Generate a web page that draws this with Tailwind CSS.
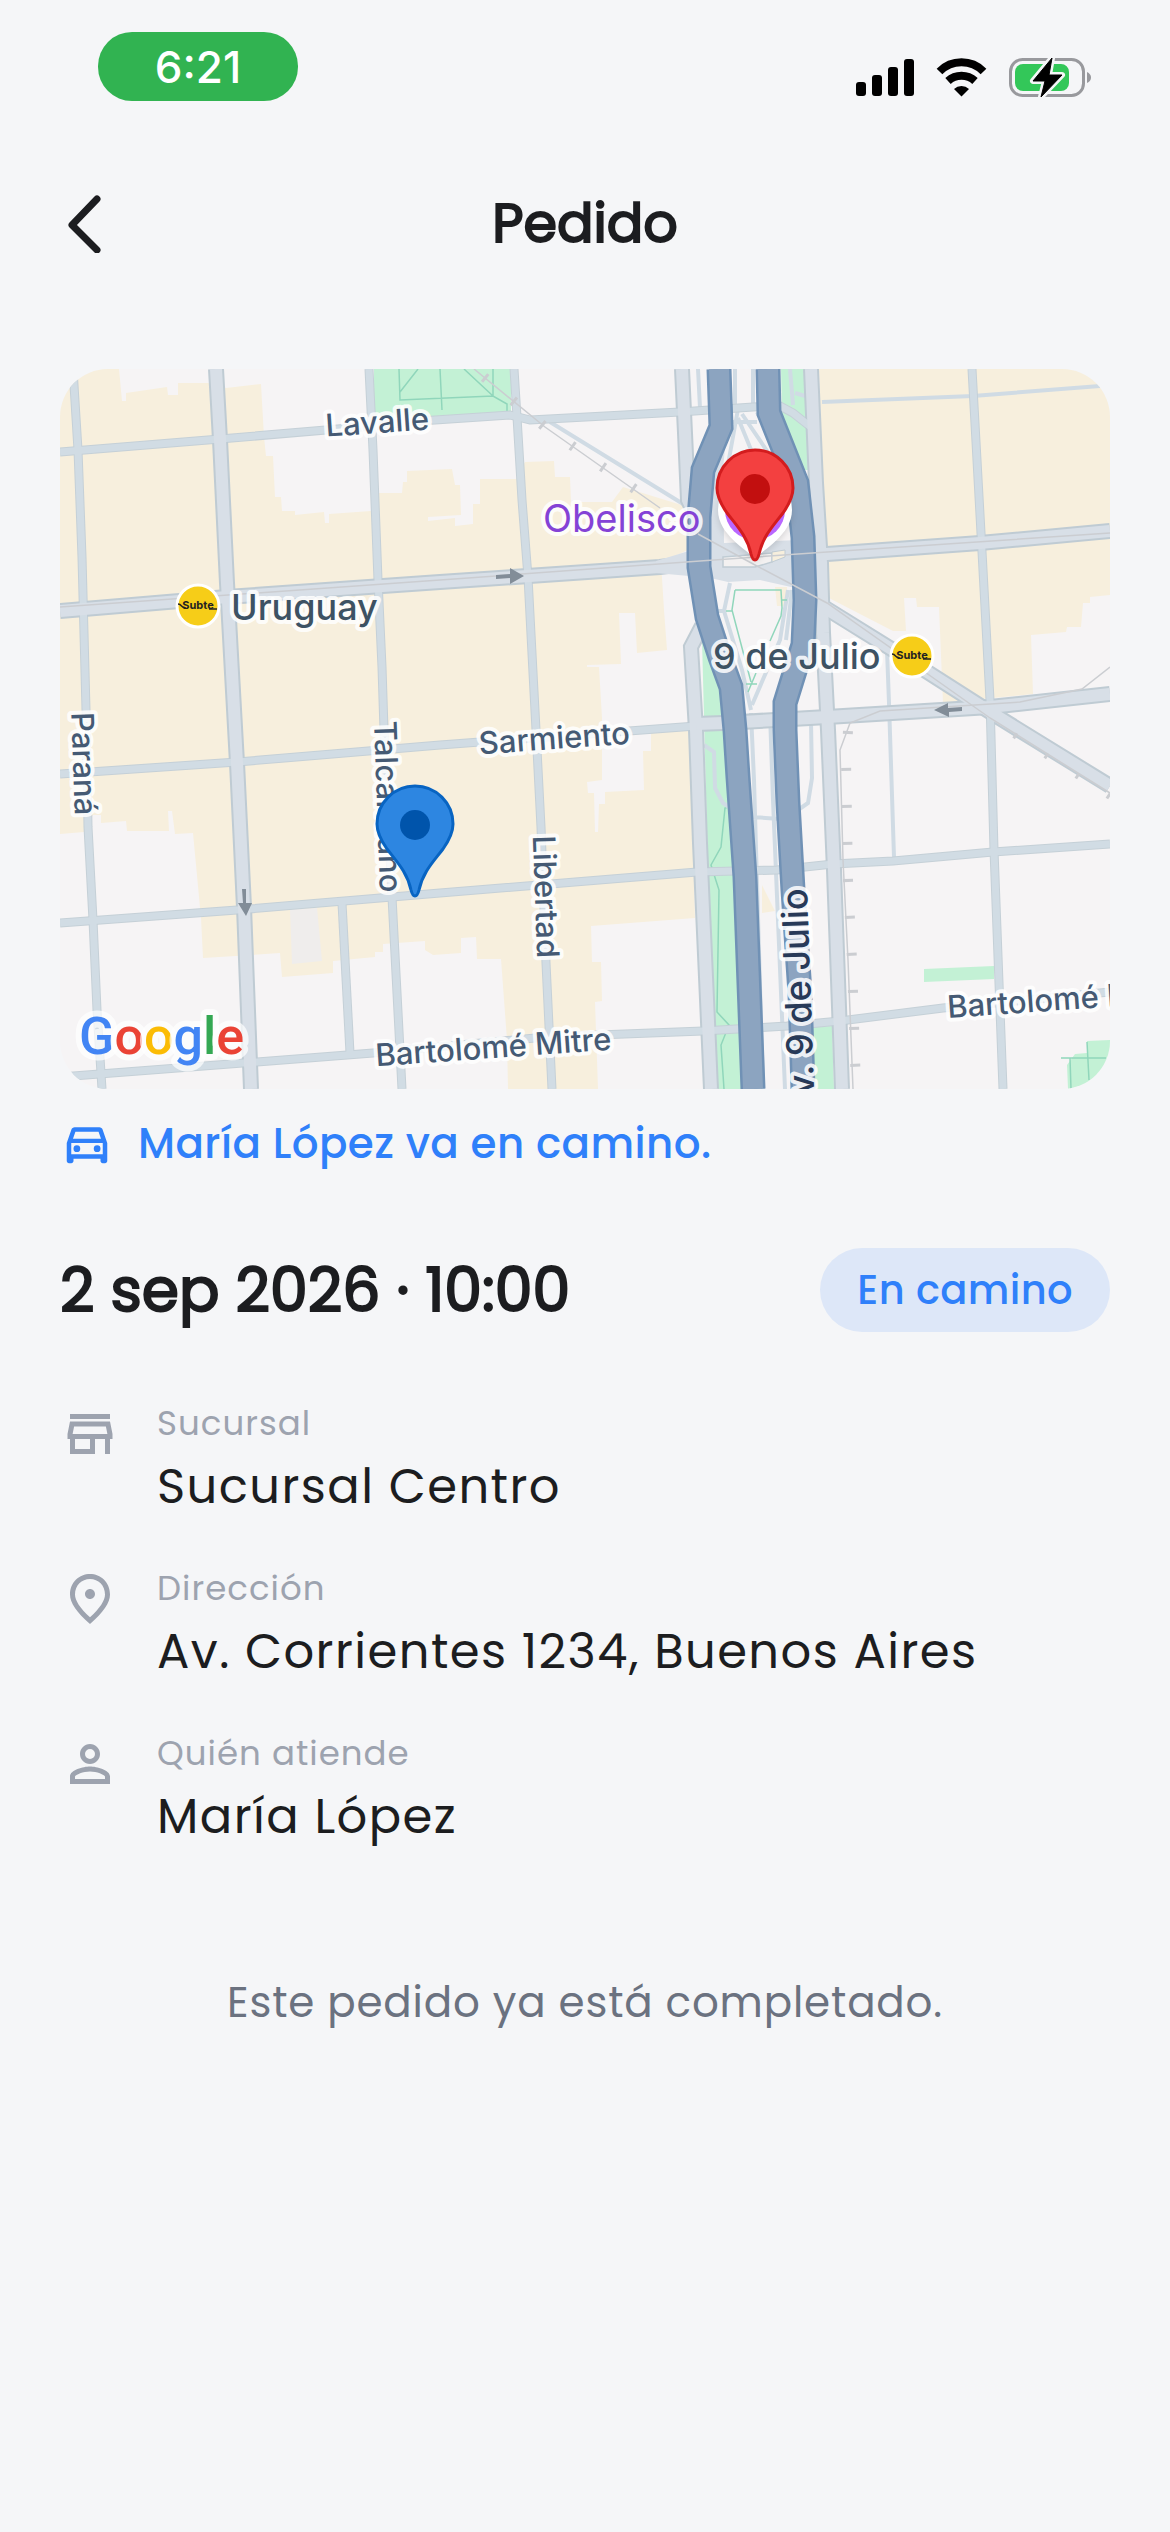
<!DOCTYPE html>
<html lang="es">
<head>
<meta charset="utf-8">
<meta name="viewport" content="width=device-width, initial-scale=1">
<title>Pedido</title>
<script src="https://cdn.jsdelivr.net/npm/@tailwindcss/browser@4"></script>
</head>
<body class="min-h-screen bg-[#f5f6f8] font-['Poppins','Inter',sans-serif] text-[#1c1d20]">

<div class="flex items-start justify-between pt-8 pr-[76px] pl-[98px]">
  <div class="flex h-[69px] w-[200px] items-center justify-center rounded-[34px] bg-[#31b351] font-['Inter',sans-serif] text-[44px] font-medium text-white">6:21</div>
  <svg class="mt-6 h-[44px] w-[240px]" viewBox="854 56 240 44" aria-hidden="true">
    <rect x="856" y="82" width="10" height="14" rx="3"/>
    <rect x="872" y="75" width="10" height="21" rx="3"/>
    <rect x="888" y="67" width="10" height="29" rx="3"/>
    <rect x="904" y="59" width="10" height="37" rx="3"/>
    <g fill="none" stroke="#000" stroke-width="8">
      <path d="M939.500 71.500a31 31 0 0 1 44 0"/>
      <path d="M948 81a20 20 0 0 1 27 0"/>
    </g>
    <path d="M954 89a11 11 0 0 1 15 0l-7.500 7.500z"/>
    <rect x="1010.500" y="59.500" width="73" height="36" rx="12" fill="none" stroke="#98999d" stroke-width="3"/>
    <path d="M1087 72q4 2 4 5.500t-4 5.500z" fill="#98999d"/>
    <rect x="1015" y="64" width="54" height="27" rx="8" fill="#33c759"/>
    <path d="M1052 58 1033 81H1045L1041 97 1062 75H1049Z" stroke="#f5f6f8" stroke-width="6" stroke-linejoin="round"/>
    <path d="M1052 58 1033 81H1045L1041 97 1062 75H1049Z" stroke="#000" stroke-width="1" stroke-linejoin="round"/>
  </svg>
</div>

<header class="mt-[74px] grid h-24 grid-cols-[1fr_auto_1fr] items-center px-[60px]">
  <button type="button" aria-label="Volver" class="flex size-12 items-center justify-center">
    <svg class="h-[60px] w-9 shrink-0" viewBox="0 0 36 60" fill="none" stroke="#1c1d20" stroke-width="7" stroke-linecap="round" stroke-linejoin="round" aria-hidden="true"><path d="M31 6 6 32l25 25"/></svg>
  </button>
  <h1 class="text-[54px] font-normal [-webkit-text-stroke:2px_#1c1d20]">Pedido</h1>
</header>

<main class="px-[60px] pt-[98px]">
  <svg class="block w-full rounded-[48px]" viewBox="60 369 1050 720" role="img" aria-label="Mapa del pedido">
    <defs>
      <g id="minor">
        <path d="M73 369 78 450 82 557 86 710 88 827 93 920 97 1010 102 1089"/>
        <path d="M369 369 373 450 378 580 382 667 384 730 392 897 402 1089"/>
        <path d="M342 903 350 1053"/>
        <path d="M514 369 517 417 522 500 528 577 536 730 541 827 546 963 552 1089"/>
        <path d="M972 369 981 533 990 700 994 850 1003 1089"/>
        <path d="M60 452 220 439 373 426 420 421 510 415 530 420 680 412 753 407 780 406 793 413 812 428"/>
        <path d="M60 774 237 762 440 745 696 726"/>
        <path d="M60 923 237 910 440 893 697 872 777 870 833 864 893 861 993 852 1110 844"/>
        <path d="M60 1077 257 1062 373 1053 546 1037 703 1031 787 1026 840 1021 943 1008 1110 992"/>
      </g>
      <g id="major">
        <path d="M216 369 220 440 227 583 237 763 244 907 251 1089"/>
        <path d="M682 369 685 433 688 500 695 515M702 626 691 647 696 730 700 843 706 977 711 1089"/>
        <path d="M811 369 816 483 821 563 823 633 828 730 834 870 842 1089"/>
        <path d="M60 611 227 597 440 582 660 567 700 562M806 556 827 554 980 543 1110 531"/>
        <path d="M696 724 723 723 827 717 990 707 1110 694"/>
        <path d="M822 606 827 609 893 650 990 712 1110 786"/>
      </g>
      <g id="avenue">
        <path d="M719 369 721 427 703 470 699 517 699 567 707 617 720 657 731 687 735 730 738 777 745 877 753 1089"/>
        <path d="M768 369 769 413 797 483 803 537 805 600 803 645 785 703 785 730 788 803 793 890 800 993 803 1089"/>
      </g>
      <path id="pin" d="M0 72C-2 72-3 70-4 66C-8 48-18 38-28 25C-35 15-38 8-38 0A38 38 0 0 1 38 0C38 8 35 15 28 25C18 38 8 48 4 66C3 70 2 72 0 72Z"/>
      <g id="subte">
        <circle r="21" fill="#f6cd18" stroke="#fff" stroke-width="3"/>
        <text y="3" text-anchor="middle" font-size="11" font-weight="700" fill="#222">Subte</text>
        <path d="M-20-2c4 0 4 5 8 4M11 3h8" fill="none" stroke="#222" stroke-width="1.500"/>
      </g>
    </defs>

    <rect x="60" y="369" width="1050" height="720" fill="#f6f4f5"/>

    <!-- commercial blocks -->
    <g fill="#f7efdd">
      <path d="M60 369H119L122 401H126V393L167 387 168 395H178V383H208L226 388 261 384 264 437 266 456H273L275 497H281L282 511H295V515L324 512 325 523H329V514L371 511 379 493H402L403 482H407V471L452 469 455 485H460L461 515 428 517V521L455 518V526L473 524V504H480V479H516L525 462 554 461 555 477H570L571 502H612L623 487 688 507V550L661 562 664 610 667 650 637 653 635 613H619L621 664 587 665V667H599L602 718V780L587 782 588 793H594L595 832H598L599 804H605V792L644 790 643 751H651V730H690L695 918 591 926 592 962H601L602 1001 595 1002 598 1089H508L507 1040 501 959H477L476 937 461 938V953L433 955 425 950V941L383 944V952H375V957L333 961V973L282 977 280 953 252 955 203 958 201 918 193 833 175 834 172 811H168L169 831H127L126 821 101 823V815H93L84 832 60 834Z"/>
      <path d="M819 369H1110V595L1090 597V603H1083L1081 627H1067L1066 632 1031 635 1033 694 943 703 939 607H917L916 598H904L906 631H893L827 597Z"/>
      <path d="M775 587H787V606H777ZM762 885 775 911 762 913Z"/>
    </g>
    <path d="M290 909 317 908 322 961 292 964Z" fill="#efedec"/>

    <!-- parks -->
    <g fill="#c3f1d5">
      <path d="M374 369H511V414L374 419ZM702 640 722 690 740 860 756 1089H718L708 870ZM781 369H805L808 470H803L782 416ZM812 1027 832 1026 834 1089H813ZM924 969 994 966V979L924 982ZM1087 1041 1110 1040V1089H1068L1067 1065 1075 1054 1087 1053Z"/>
    </g>
    <g fill="none" stroke="#90d6bb" stroke-width="1.500">
      <path d="M399 369 400 400 493 396 507 404V412M400 392 418 369M440 369 442 410M493 369V396M464 369 493 396"/>
      <path d="M736 805 725 808 721 847 711 865 719 890 717 1012 729 1025 721 1045 724 1089"/>
      <path d="M1061 1058H1106M1070 1058 1071 1089M1087 1042 1089 1080"/>
    </g>

    <!-- slip roads and paths around the avenue -->
    <g fill="none" stroke="#d0dbe4" stroke-width="4">
      <path d="M698 369 700 408M735 369V407M753 369V407M738 409 727 470M738 418 752 452M742 414 780 470M757 412 778 452M730 422H757M822 402 973 396 1100 386M790 369 793 405M795 393 812 398"/>
      <path d="M550 422 688 507M716 611H724L730 583M724 611 742 670 751 710M788 590 780 640 752 705M792 590 786 640"/>
      <path d="M751 713 754 780 763 1089M770 713 773 800 785 1089M753 817 780 819"/>
      <path d="M704 745 714 752 715 788 723 803 732 809M811 722 812 778 808 803 798 810"/>
      <path d="M887 650 889 703 894 857"/>
    </g>
    <path d="M735 590H781L782 608 781 616 770 641M735 590 732 610 751 682M726 611H732M782 600H787M746 684H757M748 692 756 673" fill="none" stroke="#90d6bb" stroke-width="1.500"/>

    <!-- streets: casing, then surface -->
    <use href="#minor" fill="none" stroke="#c5d0d7" stroke-width="9"/>
    <use href="#major" fill="none" stroke="#bfcbd3" stroke-width="16"/>
    <use href="#minor" fill="none" stroke="#d1dce4" stroke-width="7"/>
    <use href="#major" fill="none" stroke="#d8dfe7" stroke-width="12"/>

    <!-- square around the obelisk -->
    <path d="M656 561 692 550H700V577L656 573ZM727 425 712 475 706 577 728 582 760 580 800 589V540L724 543 723 470Z" fill="#d8dfe7"/>
    <path d="M723 557 772 553V562L755 567H723Z" fill="#f3f1f1" stroke="#c0ccd4" stroke-width="1.500"/>
    <path d="M772 552 785 550V557L772 562Z" fill="#f7efdd" stroke="#c0ccd4"/>

    <use href="#avenue" fill="none" stroke="#7091b5" stroke-width="25"/>
    <use href="#avenue" fill="none" stroke="#8ca4c0" stroke-width="20"/>

    <!-- underground lines with their ticks -->
    <g fill="none" stroke="#cbcdd1" stroke-width="1.500">
      <path d="M60 607 440 580 700 561 827 552 1110 533"/>
      <path d="M474 369 545 427 660 508M698 534 755 565 827 603 990 718 1110 793"/>
      <path d="M1110 667 1082 689 1020 702 880 711 850 723 840 750 843 860 848 960 853 1089"/>
    </g>
    <g fill="none" stroke="#cbcdd1" stroke-width="10" stroke-dasharray="3 34">
      <path d="M484 377 545 427 662 508"/>
      <path d="M848 731 846 760 848 880 852 960 856 1089"/>
      <path d="M1014 735 1110 797" stroke-width="6"/>
    </g>

    <!-- one-way arrows -->
    <g fill="#828d98">
      <path d="M496 575 510 574V568L524 576 510 584V578L496 579Z"/>
      <path d="M962 707 948 708V703L934 710 949 717V712L962 711Z"/>
      <path d="M242 889H246V903H252L246 916 238 903H243Z"/>
    </g>

    <!-- labels -->
    <g font-family="Inter, sans-serif" font-weight="500" text-anchor="middle" fill="#455a74" stroke="#fff" stroke-opacity=".85" stroke-width="8" stroke-linejoin="round" paint-order="stroke">
      <g font-size="31">
        <text transform="translate(378 433) rotate(-4)">Lavalle</text>
        <text transform="translate(555 749) rotate(-4)">Sarmiento</text>
        <text transform="translate(494 1058) rotate(-4)">Bartolomé Mitre</text>
        <text transform="translate(948 1018) rotate(-4)" text-anchor="start">Bartolomé Mitre</text>
        <text transform="translate(73 764) rotate(88)">Paraná</text>
        <text transform="translate(377 807) rotate(88)">Talcahuano</text>
        <text transform="translate(535 897) rotate(88)">Libertad</text>
      </g>
      <g font-size="36" text-anchor="start" fill="#3d5263">
        <text x="713" y="669">9 de Julio</text>
        <text x="231" y="620">Uruguay</text>
        <text x="543" y="532" font-size="38" font-weight="400" fill="#8442d6">Obelisco</text>
      </g>
      <text transform="translate(807 888) rotate(-92)" font-size="36" text-anchor="end" fill="#283a58">Av. 9 de Julio</text>
    </g>
    <g font-family="Inter, sans-serif">
      <use href="#subte" x="198" y="606"/>
      <use href="#subte" x="912" y="656"/>
    </g>
    <text x="79" y="1054" font-family="Roboto, sans-serif" font-size="52" font-weight="500" stroke="#fff" stroke-opacity=".7" stroke-width="12" stroke-linejoin="round" paint-order="stroke"><tspan fill="#4285f4">G</tspan><tspan fill="#ea4335">o</tspan><tspan fill="#fbbc05">o</tspan><tspan fill="#4285f4">g</tspan><tspan fill="#34a853">l</tspan><tspan fill="#ea4335">e</tspan></text>

    <!-- place pin behind the destination pin -->
    <g class="drop-shadow-md">
      <path d="M755 559C748 550 718 535 718 510A37 37 0 0 1 792 510C792 535 762 550 755 559Z" fill="#fff"/>
      <circle cx="755" cy="510" r="30" fill="#b967ff"/>
      <path d="M739 541 755 549 771 541 755 559Z" fill="#fff"/>
    </g>
    <use href="#pin" x="755" y="488" fill="#f34040" stroke="#d31c1e" stroke-width="3"/>
    <circle cx="755" cy="489" r="15" fill="#c20f0f"/>
    <use href="#pin" x="415" y="824" fill="#2d86e1" stroke="#0864c2" stroke-width="3"/>
    <circle cx="415" cy="825" r="15" fill="#0054ab"/>
  </svg>

  <p class="mt-[26px] flex h-14 items-center gap-6 text-[42px] font-medium tracking-[0.01em] text-[#2f80fa]">
    <svg class="size-[54px] shrink-0" viewBox="0 0 24 24" fill="currentColor" aria-hidden="true"><path d="M18.920 6.010C18.720 5.420 18.160 5 17.500 5h-11c-.66 0-1.210.42-1.420 1.010L3 12v8c0 .55.45 1 1 1h1c.55 0 1-.45 1-1v-1h12v1c0 .55.45 1 1 1h1c.55 0 1-.45 1-1v-8l-2.080-5.990zM6.850 7h10.290l1.080 3.110H5.770L6.850 7zM19 17H5v-5h14v5z"/><circle cx="7.500" cy="14.500" r="1.500"/><circle cx="16.500" cy="14.500" r="1.500"/></svg>
    María López va en camino.
  </p>

  <section class="mt-[77px] flex items-center justify-between">
    <h2 class="text-[60px] leading-[84px] font-normal [-webkit-text-stroke:2px_#1c1d20]">2 sep 2026 · 10:00</h2>
    <span class="flex h-[84px] items-center rounded-full bg-[#dde7f8] px-[37px] text-[40px] font-medium tracking-[0.01em] text-[#2f80fa]">En camino</span>
  </section>

  <dl class="mt-[66px] flex flex-col gap-[38px]">
    <div class="flex gap-[37px]">
      <svg class="mt-1.5 size-[60px] shrink-0 text-[#9da3af]" viewBox="0 0 24 24" fill="currentColor" aria-hidden="true"><path d="M18.360 9l.6 3H5.040l.6-3h12.720M20 4H4v2h16V4zm0 3H4l-1 5v2h1v6h10v-6h4v6h2v-6h1v-2l-1-5zM6 18v-4h6v4H6z"/></svg>
      <div class="flex flex-col">
        <dt class="text-[34px] leading-[51px] tracking-[0.03em] text-[#9da3af]">Sucursal</dt>
        <dd class="text-[48px] leading-[76px] tracking-[0.03em]">Sucursal Centro</dd>
      </div>
    </div>
    <div class="flex gap-[37px]">
      <svg class="mt-1.5 size-[60px] shrink-0 text-[#9da3af]" viewBox="0 0 24 24" fill="currentColor" aria-hidden="true"><path d="M12 12c-1.100 0-2-.9-2-2s.9-2 2-2 2 .9 2 2-.9 2-2 2zm6-1.800C18 6.570 15.350 4 12 4s-6 2.570-6 6.200c0 2.340 1.950 5.440 6 9.140 4.050-3.700 6-6.800 6-9.140zM12 2c4.200 0 8 3.220 8 8.200 0 3.320-2.670 7.250-8 11.800-5.330-4.550-8-8.480-8-11.800C4 5.220 7.800 2 12 2z"/></svg>
      <div class="flex flex-col">
        <dt class="text-[34px] leading-[51px] tracking-[0.03em] text-[#9da3af]">Dirección</dt>
        <dd class="text-[48px] leading-[76px] tracking-[0.03em]">Av. Corrientes 1234, Buenos Aires</dd>
      </div>
    </div>
    <div class="flex gap-[37px]">
      <svg class="mt-1.5 size-[60px] shrink-0 text-[#9da3af]" viewBox="0 0 24 24" fill="currentColor" aria-hidden="true"><path d="M12 6a2 2 0 1 1 0 4 2 2 0 0 1 0-4m0 9c2.700 0 5.800 1.290 6 2v1H6v-.99c.2-.72 3.300-2.010 6-2.010m0-11C9.790 4 8 5.790 8 8s1.790 4 4 4 4-1.790 4-4-1.790-4-4-4zm0 9c-2.670 0-8 1.340-8 4v3h16v-3c0-2.660-5.330-4-8-4z"/></svg>
      <div class="flex flex-col">
        <dt class="text-[34px] leading-[51px] tracking-[0.03em] text-[#9da3af]">Quién atiende</dt>
        <dd class="text-[48px] leading-[76px] tracking-[0.03em]">María López</dd>
      </div>
    </div>
  </dl>

  <p class="mt-[118px] text-center text-[42px] leading-[60px] tracking-[0.02em] text-[#6b7280]">Este pedido ya está completado.</p>
</main>
</body>
</html>
